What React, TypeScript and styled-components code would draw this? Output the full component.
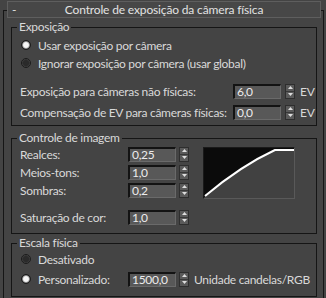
import React from 'react';
import styled, { createGlobalStyle } from 'styled-components';

const Global = createGlobalStyle`
  html, body { margin: 0; padding: 0; background: #444444; }
  body {
    font-family: Lato, "Liberation Sans", sans-serif;
    font-size: 12px;
    letter-spacing: -0.3px;
    color: #d9d9d9;
  }
  * { box-sizing: border-box; }
`;

const Panel = styled.div`
  width: 326px;
  height: 298px;
  overflow: hidden;
  background: #444444;
  padding-top: 10px;
`;

const Frame = styled.div`
  margin: 0 2px 0 3px;
  height: 300px;
  border: 1px solid #161616;
  border-bottom: none;
`;

const TitleBar = styled.div`
  margin: -10px 2px 0 3px;
  height: 17px;
  border: 1px solid #5e5e5e;
  background: #474747;
  display: grid;
  grid-template-columns: 1fr auto 1fr;
  align-items: center;
  color: #e2e2e2;
  line-height: 15px;
  letter-spacing: -0.15px;
`;

const Minus = styled.span`
  justify-self: start;
  padding-left: 4px;
`;

const Group = styled.fieldset<{ $mt: number; $pt: number; $pb: number }>`
  margin: ${p => p.$mt}px 6px 0 7px;
  padding: ${p => p.$pt}px 0 ${p => p.$pb}px 0;
  border: 1px solid #151515;
  min-width: 0;
`;

const Legend = styled.legend`
  margin-left: 5px;
  padding: 0 2px;
  line-height: 14px;
  color: #d9d9d9;
`;

const Row = styled.div<{ $h?: number; $mt?: number }>`
  display: flex;
  align-items: center;
  height: ${p => p.$h ?? 18}px;
  margin-top: ${p => p.$mt ?? 0}px;
  padding-left: 8px;
`;

const RadioRow = styled(Row)`
  padding-left: 9px;
`;

const Label = styled.span<{ $w?: number }>`
  width: ${p => (p.$w ? `${p.$w}px` : 'auto')};
  flex: none;
  white-space: nowrap;
`;

const RadioLabel = styled.label<{ $w?: number }>`
  display: flex;
  align-items: center;
  gap: 7px;
  width: ${p => (p.$w ? `${p.$w}px` : 'auto')};
  flex: none;
  white-space: nowrap;
`;

const RadioDot = styled.span<{ $on?: boolean }>`
  width: 10px;
  height: 10px;
  flex: none;
  border-radius: 50%;
  border: 1px solid #1b1b1b;
  background: ${p =>
    p.$on
      ? 'radial-gradient(circle, #f6f6f6 0 2.4px, #b0b0b0 3.2px, #5a5a5a 4px)'
      : 'radial-gradient(circle, #2a2a2a 0 2.6px, #383838 3.6px, #555 4.2px)'};
`;

const ValueBox = styled.div`
  width: 48px;
  height: 15px;
  flex: none;
  background: #585858;
  border-top: 2px solid #131313;
  border-left: 2px solid #131313;
  border-right: 1px solid #6a6a6a;
  border-bottom: 1px solid #6a6a6a;
  padding-left: 2px;
  line-height: 12px;
  color: #ececec;
`;

const Spinner = styled.div<{ $gap: number }>`
  width: 10px;
  height: 15px;
  flex: none;
  margin-left: ${p => p.$gap}px;
  display: flex;
  flex-direction: column;
  background: #5a5a5a;
  border: 1px solid #2e2e2e;
`;

const SpinHalf = styled.div`
  flex: 1;
  display: flex;
  align-items: center;
  justify-content: center;
  & + & {
    border-top: 1px solid #383838;
  }
`;

const Unit = styled.span`
  margin-left: 5px;
  white-space: nowrap;
`;

const ImageArea = styled.div`
  display: flex;
  align-items: flex-start;
`;

const SpinColumn = styled.div`
  display: flex;
  flex-direction: column;
`;

const CurveBox = styled.div`
  margin-left: 14px;
  margin-top: 2px;
  width: 92px;
  height: 52px;
  border-top: 1px solid #1a1a1a;
  border-left: 1px solid #1a1a1a;
  border-right: 1px solid #595959;
  border-bottom: 1px solid #595959;
  background: #414141;
  display: flex;
`;

const Arrow = ({ up }: { up?: boolean }) => (
  <svg width="5" height="3" viewBox="0 0 5 3">
    <polygon points={up ? '2.5,0 5,3 0,3' : '0,0 5,0 2.5,3'} fill="#dedede" />
  </svg>
);

const Spin = ({ gap = 4 }: { gap?: number }) => (
  <Spinner $gap={gap}>
    <SpinHalf>
      <Arrow up />
    </SpinHalf>
    <SpinHalf>
      <Arrow />
    </SpinHalf>
  </Spinner>
);

const Curve = () => (
  <svg width="90" height="50" viewBox="0 0 90 50">
    <path d="M0,50 L1,48 C20,32 45,14 71,2 L90,2 L90,0 L0,0 Z" fill="#0b0b0b" />
    <path d="M1,48 C20,32 45,14 71,2 L90,2" fill="none" stroke="#ffffff" strokeWidth="2" />
  </svg>
);

export default function App() {
  return (
    <>
      <Global />
      <Panel>
        <Frame>
          <TitleBar>
            <Minus>-</Minus>
            <span>Controle de exposição da câmera física</span>
            <span />
          </TitleBar>

          <Group $mt={2} $pt={2} $pb={3}>
            <Legend>Exposição</Legend>
            <RadioRow>
              <RadioLabel>
                <RadioDot $on />
                Usar exposição por câmera
              </RadioLabel>
            </RadioRow>
            <RadioRow>
              <RadioLabel>
                <RadioDot />
                Ignorar exposição por câmera (usar global)
              </RadioLabel>
            </RadioRow>
            <Row $h={20} $mt={9}>
              <Label $w={213}>Exposição para câmeras não físicas:</Label>
              <ValueBox>6,0</ValueBox>
              <Spin />
              <Unit>EV</Unit>
            </Row>
            <Row $h={20} $mt={1}>
              <Label $w={213}>Compensação de EV para câmeras físicas:</Label>
              <ValueBox>0,0</ValueBox>
              <Spin />
              <Unit>EV</Unit>
            </Row>
          </Group>

          <Group $mt={5} $pt={0} $pb={7}>
            <Legend>Controle de imagem</Legend>
            <ImageArea>
              <SpinColumn>
                <Row>
                  <Label $w={108}>Realces:</Label>
                  <ValueBox>0,25</ValueBox>
                  <Spin gap={3} />
                </Row>
                <Row>
                  <Label $w={108}>Meios-tons:</Label>
                  <ValueBox>1,0</ValueBox>
                  <Spin gap={3} />
                </Row>
                <Row>
                  <Label $w={108}>Sombras:</Label>
                  <ValueBox>0,2</ValueBox>
                  <Spin gap={3} />
                </Row>
              </SpinColumn>
              <CurveBox>
                <Curve />
              </CurveBox>
            </ImageArea>
            <Row $mt={9}>
              <Label $w={108}>Saturação de cor:</Label>
              <ValueBox>1,0</ValueBox>
              <Spin gap={3} />
            </Row>
          </Group>

          <Group $mt={2} $pt={0} $pb={8}>
            <Legend>Escala física</Legend>
            <RadioRow>
              <RadioLabel>
                <RadioDot />
                Desativado
              </RadioLabel>
            </RadioRow>
            <RadioRow $mt={2}>
              <RadioLabel $w={107}>
                <RadioDot $on />
                Personalizado:
              </RadioLabel>
              <ValueBox>1500,0</ValueBox>
              <Spin gap={3} />
              <Unit>Unidade candelas/RGB</Unit>
            </RadioRow>
          </Group>
        </Frame>
      </Panel>
    </>
  );
}
